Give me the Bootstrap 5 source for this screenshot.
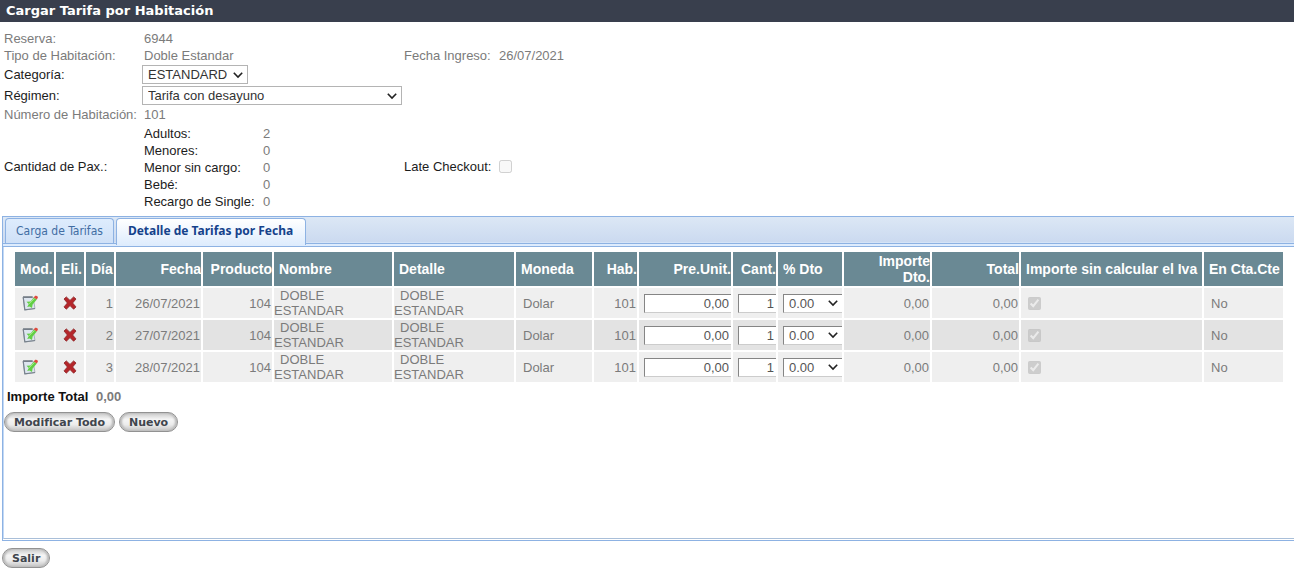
<!DOCTYPE html>
<html lang="es">
<head>
<meta charset="utf-8">
<meta name="viewport" content="width=device-width, initial-scale=1">
<title>Cargar Tarifa por Habitación</title>
<link href="https://cdn.jsdelivr.net/npm/bootstrap@5.3.0/dist/css/bootstrap.min.css" rel="stylesheet">
<style>
  body { font: 13px/17px "Liberation Sans", Arial, sans-serif; color: #1c1c1c; background: #fff; }
  .titlebar { background: #393f4d; height: 22px; font: bold 13px/21px "DejaVu Sans", Verdana, sans-serif; padding-left: 6px; }
  .soft { color: #7b7b7b; }

  .booking { display: grid; grid-template-columns: 138px 262px 95px 1fr; grid-template-rows: 17px 17px 21px 21px 17px auto; align-items: center; padding: 8px 4px 6px; }
  .booking > .first { grid-column: 1; }
  .pax { display: grid; grid-template-columns: 119px 1fr; grid-auto-rows: 17px; padding-left: 2px; padding-top: 2px; }
  .val { padding-left: 2px; }

  .field-select { height: 19px; padding: 0 20px 0 5px; border: 1px solid #b4b4b4; border-radius: 0; color: #333; font-size: 13px; line-height: 17px; background-size: 10px 8px; background-position: right 4px center;
    background-image: url("data:image/svg+xml,%3csvg xmlns='http://www.w3.org/2000/svg' viewBox='0 0 10 8'%3e%3cpath fill='none' stroke='%23222' stroke-width='1.6' d='M.8 1.8 5 6l4.2-4.2'/%3e%3c/svg%3e"); }
  .w-cat { width: 106px; }
  .w-reg { width: 260px; }
  input[type=checkbox] { width: 13px; height: 13px; margin: 0; display: block; }

  .tabpanel { margin-left: 2px; border: 1px solid #8db2e3; border-right: 0; }
  .tabstrip { height: 30px; padding: 1px 0 0 2px; background: linear-gradient(#dce7f5, #cbdaf0 25px, #deecfd 26px); border: 0; border-bottom: 1px solid #8db2e3; position: relative; }
  .tabstrip::after { content: ""; position: absolute; left: 0; right: 0; bottom: 2px; border-top: 1px solid #8db2e3; }
  .tabstrip .nav-link { height: 25px; padding: 0 10px; border: 1px solid #8db2e3; border-bottom: 0; border-radius: 4px 4px 0 0; font: 12px/24px "DejaVu Sans Condensed", Tahoma, sans-serif; color: #416da3; background: linear-gradient(#deecfd, #cfe0f7); margin-right: 2px; }
  .tabstrip .nav-link.active { height: 27px; padding: 0 12px 0 11px; font-family: "Noto Sans", Tahoma, sans-serif; font-weight: bold; color: #15428b; background: linear-gradient(#fff, #deecfd); border-color: #8db2e3; position: relative; z-index: 1; }
  .panel-content { min-height: 292px; padding: 3px 9px 0 9px; border-left: 1px solid #c3d9f5; border-bottom: 1px solid #a9bfd9; margin-bottom: 1px; }

  .rates { table-layout: fixed; width: 100%; border-collapse: separate; border-spacing: 2px; margin: 0; color: #7b7b7b; }
  .rates th { height: 34px; padding: 0; background: #6a8994; color: #fff; font-size: 14px; line-height: 16px; vertical-align: middle; white-space: nowrap; }
  .rates th.start { padding-left: 5px; }
  .rates th.wrap { white-space: normal; }
  .rates td { height: 30px; padding: 0; background: #efefef; vertical-align: middle; line-height: 15px; }
  .rates tr:nth-child(even) td { background: #e3e3e3; }
  .rates td.text-end { padding-right: 1px; }
  .rates td.inset { padding-left: 7px; }
  .rates td.names { text-indent: 6px; }
  .rates td.names span { display: block; text-indent: 0; }
  .rates td.boxed { padding: 0 0 0 5px; }
  .rates td input[type=text] { display: block; width: 100%; height: 19px; padding: 0 2px; border: 1px solid #858585; border-right: 0; border-bottom-color: #ccc; border-radius: 0; text-align: right; color: #555; background: #fff; }
  .rates td .field-select { width: 100%; border-color: #858585; border-right: 0; border-bottom-color: #ccc; color: #555; }
  .icon-btn { padding: 0; border: 0; background: none; display: block; }
  .icon-btn svg { display: block; }

  .pill { height: 20px; padding: 0 9px; border: 1px solid #929292; border-radius: 10px; background: linear-gradient(#c9c9c9, #f5f5f5 35%, #ececec 65%, #c2c2c2); box-shadow: inset 2px 0 2px #bbb, inset -2px 0 2px #bbb; font: bold 11px/17px "DejaVu Sans", Verdana, sans-serif; color: #40454d; }
  .exit { margin: 7px 0 0 2px; }
  .total { font-weight: bold; color: #111; padding-left: 3px; }
  .total .soft { margin-left: 4px; }
  .lower { margin: 4px 0 0 -9px; }
  .actions { margin-top: 7px; }
</style>
</head>
<body>
<svg class="d-none" xmlns="http://www.w3.org/2000/svg">
  <symbol id="edit" viewBox="0 0 16 16">
    <path d="M1.2 2.2 11 2 13 13.6 2.8 15Z" fill="#dde5ef" stroke="#9aa3ad" stroke-width=".8"/>
    <path d="M1 2.1H10.5" stroke="#68717b" stroke-width="1.5"/>
    <path d="M1.2 2.2 2.8 14.8 13 13.5" fill="none" stroke="#78828c" stroke-width="1.2"/>
    <path d="M4.5 6.8 8.5 6.5 12 2.6 14.8 4.6 10.6 9.5 10 13 7.5 11.5 5.2 12 6.8 9Z" fill="#62cf45"/>
    <path d="M6.8 9 12.6 3.4" stroke="#a5ee86" stroke-width="1"/>
    <path d="M11.6 2.6 13.2.8Q15.6.3 16 2.3L14.9 4.6Z" fill="#dd4a3e"/>
  </symbol>
  <symbol id="remove" viewBox="0 0 14 14">
    <path d="M1 3 3.3.9 7 4.4 10.6.9 13 3 9.6 7 13 10.9 10.6 13.2 7 9.6 3.3 13.2 1 10.9 4.4 7Z" fill="#b5262a" stroke="#8a1f22" stroke-width=".8" stroke-linejoin="round"/>
  </symbol>
</svg>

<header class="titlebar text-white">Cargar Tarifa por Habitación</header>

<form>
  <div class="booking">
    <span class="first soft">Reserva:</span><span class="val soft">6944</span>
    <span class="first soft">Tipo de Habitación:</span><span class="val soft">Doble Estandar</span>
    <span class="soft">Fecha Ingreso:</span><span class="soft">26/07/2021</span>
    <label class="first" for="categoria">Categoría:</label>
    <select id="categoria" class="form-select field-select w-cat"><option>ESTANDARD</option></select>
    <label class="first" for="regimen">Régimen:</label>
    <select id="regimen" class="form-select field-select w-reg"><option>Tarifa con desayuno</option></select>
    <span class="first soft">Número de Habitación:</span><span class="val soft">101</span>
    <span class="first">Cantidad de Pax.:</span>
    <div class="pax">
      <span>Adultos:</span><span class="soft">2</span>
      <span>Menores:</span><span class="soft">0</span>
      <span>Menor sin cargo:</span><span class="soft">0</span>
      <span>Bebé:</span><span class="soft">0</span>
      <span>Recargo de Single:</span><span class="soft">0</span>
    </div>
    <label for="late">Late Checkout:</label>
    <input type="checkbox" id="late" disabled>
  </div>

  <section class="tabpanel">
    <nav class="nav tabstrip align-items-start">
      <a class="nav-link" href="#carga">Carga de Tarifas</a>
      <a class="nav-link active" href="#detalle" aria-current="page">Detalle de Tarifas por Fecha</a>
    </nav>
    <div class="panel-content" id="detalle">
      <table class="rates">
        <colgroup>
          <col style="width:39px"><col style="width:28px"><col style="width:28px"><col style="width:85px">
          <col style="width:69px"><col style="width:118px"><col style="width:120px"><col style="width:76px">
          <col style="width:43px"><col style="width:92px"><col style="width:43px"><col style="width:64px">
          <col style="width:86px"><col style="width:87px"><col style="width:181px"><col style="width:79px">
        </colgroup>
        <thead>
          <tr>
            <th class="start">Mod.</th><th class="start">Eli.</th><th class="start">Día</th><th class="text-end">Fecha</th>
            <th class="text-end">Producto</th><th class="start">Nombre</th><th class="start">Detalle</th><th class="start">Moneda</th>
            <th class="text-end">Hab.</th><th class="text-end">Pre.Unit.</th><th class="text-end">Cant.</th><th class="start">% Dto</th>
            <th class="text-end wrap">Importe<br>Dto.</th><th class="text-end">Total</th><th class="start">Importe sin calcular el Iva</th><th class="start">En Cta.Cte</th>
          </tr>
        </thead>
        <tbody>
          <tr>
            <td class="inset"><button type="button" class="icon-btn" aria-label="Modificar"><svg width="16" height="16"><use href="#edit"/></svg></button></td>
            <td class="inset"><button type="button" class="icon-btn" aria-label="Eliminar"><svg width="14" height="14"><use href="#remove"/></svg></button></td>
            <td class="text-end">1</td><td class="text-end">26/07/2021</td><td class="text-end">104</td>
            <td class="names">DOBLE<span>ESTANDAR</span></td><td class="names">DOBLE<span>ESTANDAR</span></td>
            <td class="inset">Dolar</td><td class="text-end">101</td>
            <td class="boxed"><input type="text" value="0,00" aria-label="Precio unitario"></td>
            <td class="boxed"><input type="text" value="1" aria-label="Cantidad"></td>
            <td class="boxed"><select class="form-select field-select" aria-label="% Dto"><option>0.00</option></select></td>
            <td class="text-end">0,00</td><td class="text-end">0,00</td>
            <td class="inset"><input type="checkbox" checked disabled aria-label="Importe sin calcular el Iva"></td><td class="inset">No</td>
          </tr>
          <tr>
            <td class="inset"><button type="button" class="icon-btn" aria-label="Modificar"><svg width="16" height="16"><use href="#edit"/></svg></button></td>
            <td class="inset"><button type="button" class="icon-btn" aria-label="Eliminar"><svg width="14" height="14"><use href="#remove"/></svg></button></td>
            <td class="text-end">2</td><td class="text-end">27/07/2021</td><td class="text-end">104</td>
            <td class="names">DOBLE<span>ESTANDAR</span></td><td class="names">DOBLE<span>ESTANDAR</span></td>
            <td class="inset">Dolar</td><td class="text-end">101</td>
            <td class="boxed"><input type="text" value="0,00" aria-label="Precio unitario"></td>
            <td class="boxed"><input type="text" value="1" aria-label="Cantidad"></td>
            <td class="boxed"><select class="form-select field-select" aria-label="% Dto"><option>0.00</option></select></td>
            <td class="text-end">0,00</td><td class="text-end">0,00</td>
            <td class="inset"><input type="checkbox" checked disabled aria-label="Importe sin calcular el Iva"></td><td class="inset">No</td>
          </tr>
          <tr>
            <td class="inset"><button type="button" class="icon-btn" aria-label="Modificar"><svg width="16" height="16"><use href="#edit"/></svg></button></td>
            <td class="inset"><button type="button" class="icon-btn" aria-label="Eliminar"><svg width="14" height="14"><use href="#remove"/></svg></button></td>
            <td class="text-end">3</td><td class="text-end">28/07/2021</td><td class="text-end">104</td>
            <td class="names">DOBLE<span>ESTANDAR</span></td><td class="names">DOBLE<span>ESTANDAR</span></td>
            <td class="inset">Dolar</td><td class="text-end">101</td>
            <td class="boxed"><input type="text" value="0,00" aria-label="Precio unitario"></td>
            <td class="boxed"><input type="text" value="1" aria-label="Cantidad"></td>
            <td class="boxed"><select class="form-select field-select" aria-label="% Dto"><option>0.00</option></select></td>
            <td class="text-end">0,00</td><td class="text-end">0,00</td>
            <td class="inset"><input type="checkbox" checked disabled aria-label="Importe sin calcular el Iva"></td><td class="inset">No</td>
          </tr>
        </tbody>
      </table>
      <div class="lower">
        <div class="total">Importe Total <span class="soft">0,00</span></div>
        <div class="d-flex gap-1 actions">
          <button type="button" class="pill">Modificar Todo</button>
          <button type="button" class="pill">Nuevo</button>
        </div>
      </div>
    </div>
  </section>
  <button type="button" class="pill exit">Salir</button>
</form>
<script src="https://cdn.jsdelivr.net/npm/bootstrap@5.3.0/dist/js/bootstrap.bundle.min.js"></script>
</body>
</html>
